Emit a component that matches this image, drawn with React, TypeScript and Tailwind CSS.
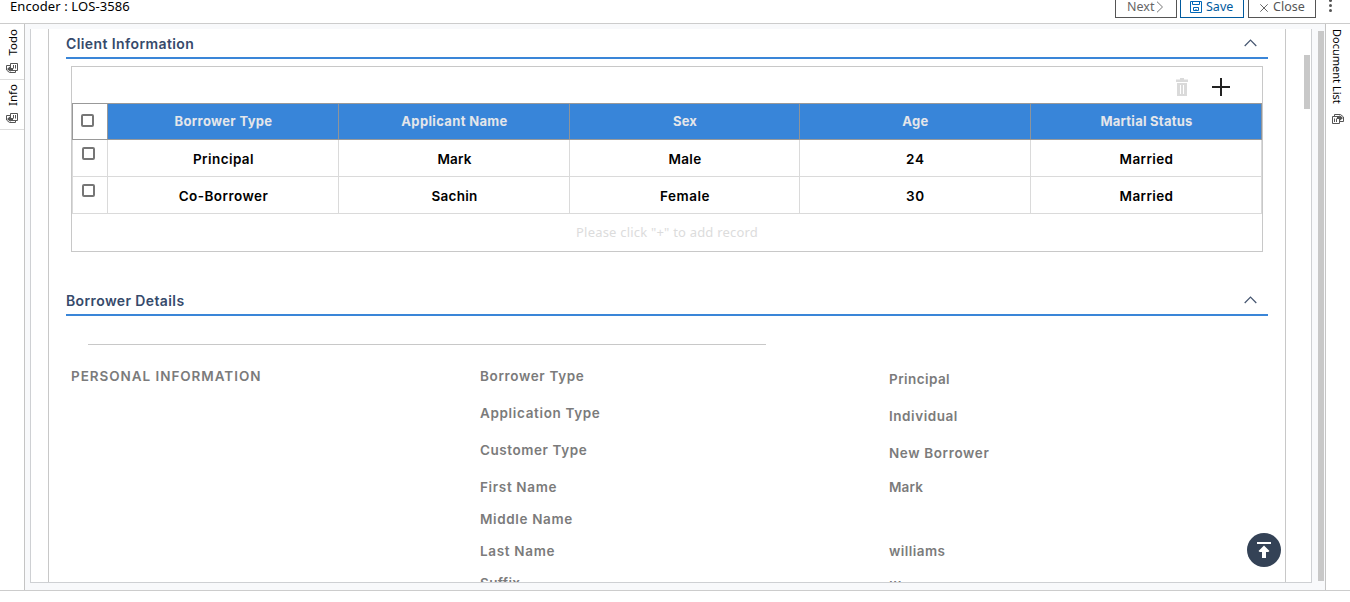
import { ReactNode } from "react";

type Cell = { text: string; ls: number };

const headers: Cell[] = [
  { text: "Borrower Type", ls: 0.35 },
  { text: "Applicant Name", ls: 0.35 },
  { text: "Sex", ls: 0.2 },
  { text: "Age", ls: 0.4 },
  { text: "Martial Status", ls: 0.25 },
];

const records: Cell[][] = [
  [
    { text: "Principal", ls: 0.42 },
    { text: "Mark", ls: 0.1 },
    { text: "Male", ls: 0.35 },
    { text: "24", ls: 0.8 },
    { text: "Married", ls: 0.38 },
  ],
  [
    { text: "Co-Borrower", ls: 0.45 },
    { text: "Sachin", ls: 0.25 },
    { text: "Female", ls: 0.55 },
    { text: "30", ls: 0.8 },
    { text: "Married", ls: 0.38 },
  ],
];

type Detail = { label: Cell; value?: Cell; height: string; shift?: string };

const details: Detail[] = [
  { label: { text: "Borrower Type", ls: 0.65 }, value: { text: "Principal", ls: 0.42 }, height: "h-[37px]", shift: "pt-[3px]" },
  { label: { text: "Application Type", ls: 0.65 }, value: { text: "Individual", ls: 0.55 }, height: "h-[37px]", shift: "pt-[3px]" },
  { label: { text: "Customer Type", ls: 0.57 }, value: { text: "New Borrower", ls: 0.62 }, height: "h-[37px]", shift: "pt-[3px]" },
  { label: { text: "First Name", ls: 0.66 }, value: { text: "Mark", ls: 0.15 }, height: "h-8" },
  { label: { text: "Middle Name", ls: 0.63 }, height: "h-8" },
  { label: { text: "Last Name", ls: 0.67 }, value: { text: "williams", ls: 0.45 }, height: "h-8" },
  { label: { text: "Suffix", ls: 0.35 }, value: { text: "III", ls: 0.6 }, height: "h-8", shift: "pt-[3px]" },
];

function Txt({ cell }: { cell: Cell }) {
  return <span style={{ letterSpacing: cell.ls }}>{cell.text}</span>;
}

function CardsIcon({ turned = false }: { turned?: boolean }) {
  return (
    <svg width="12" height="10" viewBox="0 0 12 10" fill="none" stroke="#555" className={turned ? "rotate-180" : ""}>
      <path d="M.5 2.500h7v7H.5zM2.500 4.500v3.500M4.500 4.500v3.500" />
      <path d="M2.500 2.500v-2H8.500l3 2.500v4.500H7.500" />
      <path d="M5 2.500h2.500V1l3.500 3-3.500 3V5H5z" fill="#555" stroke="none" />
    </svg>
  );
}

function Checkbox() {
  return <div className="size-[13px] rounded-[2px] border-2 border-[#767676] bg-white" />;
}

function SectionTitle({ cell }: { cell: Cell }) {
  return (
    <div className="flex h-[30px] items-center justify-between border-b-2 border-[#3a86d8] pr-[11px] text-[14px] font-semibold text-[#364a6b]">
      <div>
        <Txt cell={cell} />
      </div>
      <svg width="13" height="8" viewBox="0 0 13 8" fill="none" stroke="#44546f" strokeWidth="1.2">
        <path d="M.7 7 6.5 1l5.8 6" />
      </svg>
    </div>
  );
}

function HeaderButton({ className, children }: { className: string; children: ReactNode }) {
  return (
    <button className={`flex h-5 items-end border border-t-0 pb-[1px] text-[12.5px] leading-[18px] ${className}`}>{children}</button>
  );
}

export default function App() {
  return (
    <div className="flex h-[602px] w-[1350px] flex-col overflow-hidden bg-white font-['Inter',sans-serif]">
      <header className="flex h-6 shrink-0 items-end justify-between border-b border-[#ccc] pl-[10px] font-['Noto_Sans',sans-serif]">
        <div className="h-[26px] text-[13px] leading-[18px] tracking-[0.1px] text-black">Encoder : LOS-3586</div>
        <div className="flex pb-[5px]">
          <HeaderButton className="w-[62px] border-[#555] pl-[11px] text-[#666]">
            Next
            <svg className="mb-[3px] ml-[2px]" width="8" height="12" viewBox="0 0 8 12" fill="none" stroke="#777">
              <path d="m1 .7 5.5 5.3L1 11.3" />
            </svg>
          </HeaderButton>
          <HeaderButton className="ml-[3px] w-16 border-[#005a9e] pl-[9px] text-[#005a9e]">
            <svg className="mb-[3px] mr-[4px]" width="12" height="12" viewBox="0 0 12 12" fill="none" stroke="#0067b8">
              <path d="M.5.5h11v11H.5zM2.5.5v3h7v-3M3.500 9.500V6.500h5v3z" />
              <path d="M5.500 8.500h1" />
            </svg>
            Save
          </HeaderButton>
          <HeaderButton className="ml-1 w-[68px] border-[#555] pl-[11px] text-[#555]">
            <svg className="mb-[4px] mr-[5px]" width="8" height="8" viewBox="0 0 8 8" fill="none" stroke="#555" strokeWidth=".9">
              <path d="m.3.3 7.400 7.400M7.700.3.300 7.700" />
            </svg>
            Close
          </HeaderButton>
          <div className="ml-[13px] mr-[18px] flex flex-col justify-end gap-[2px] pb-[6px]">
            <i className="size-[3px] rounded-full bg-[#555]" />
            <i className="size-[3px] rounded-full bg-[#555]" />
            <i className="size-[3px] rounded-full bg-[#555]" />
          </div>
        </div>
      </header>

      <div className="flex h-[567px] shrink-0 border-b border-[#ccc]">
        <aside className="w-[25px] shrink-0 border-r border-[#c4c4c4] font-['Noto_Sans',sans-serif] text-[11.5px] text-black">
          <div className="flex h-14 flex-col items-center justify-between border-b border-[#ddd] pb-[6px] pt-[5px]">
            <span className="ml-[2px] rotate-180 leading-4 [writing-mode:vertical-rl]">Todo</span>
            <CardsIcon turned />
          </div>
          <div className="flex h-[50px] flex-col items-center justify-between border-b border-[#ddd] pb-[6px] pt-[4px]">
            <span className="ml-[2px] rotate-180 leading-4 [writing-mode:vertical-rl]">Info</span>
            <CardsIcon turned />
          </div>
        </aside>

        <main className="flex min-w-0 grow bg-[#f8f9fb] pl-[5px] pt-[5px]">
          <div className="flex h-[554px] w-[1282px] overflow-hidden border-x border-b border-[#ced0d3] bg-white">
            <div className="relative ml-[17px] h-[553px] w-[1238px] overflow-hidden border-x border-[#c8c8c8] px-[17px]">
              <SectionTitle cell={{ text: "Client Information", ls: 0.4 }} />
              <div className="ml-[5px] mt-[7px] w-[1192px] border border-[#c8c8c8]">
                <div className="flex h-9 items-center justify-end gap-6 pr-8 pt-[3px]">
                  <svg width="12" height="18" viewBox="0 0 12 18" fill="#dadada">
                    <path d="M4 0h4v1.500h4v2.500H0V1.500h4zM1 5h10v13H1zM4 7v9h1V7zM7 7v9h1V7z" fillRule="evenodd" />
                  </svg>
                  <svg width="18" height="18" viewBox="0 0 18 18" fill="#222">
                    <path d="M8 0h2v8h8v2h-8v8H8v-8H0V8h8z" />
                  </svg>
                </div>
                <div className="grid h-[37px] grid-cols-[36px_231px_231px_230px_231px_231px] border-y border-[#999] text-[13px] font-bold text-[#e4e6ea]">
                  <div className="border-x border-[#999] pl-2 pt-[10px]">
                    <Checkbox />
                  </div>
                  {headers.map((h) => (
                    <div key={h.text} className="flex items-center justify-center border-r border-[#8f9499] bg-[#3885d9] pl-px">
                      <Txt cell={h} />
                    </div>
                  ))}
                </div>
                {records.map((row) => (
                  <div key={row[0].text} className="grid h-[37px] grid-cols-[36px_231px_231px_230px_231px_231px] border-b border-[#dadada] text-[13.5px] font-semibold text-black">
                    <div className="border-x border-[#dadada] pl-[9px] pt-[7px]">
                      <Checkbox />
                    </div>
                    {row.map((c, i) => (
                      <div key={i} className="flex items-center justify-center border-r border-[#dadada] pl-px pt-[3px]">
                        <Txt cell={c} />
                      </div>
                    ))}
                  </div>
                ))}
                <div className="flex h-[37px] items-center justify-center font-['Noto_Sans',sans-serif] text-[13px] text-[#dcdcdc]">
                  <Txt cell={{ text: 'Please click "+" to add record', ls: 0.2 }} />
                </div>
              </div>

              <div className="mt-[34px]">
                <SectionTitle cell={{ text: "Borrower Details", ls: 0.38 }} />
              </div>
              <div className="ml-[22px] mt-7 w-[678px] border-t border-[#c8c8c8]" />
              <div className="ml-[5px] mt-[23px] flex text-[13.5px] font-semibold leading-4 text-[#7b7b7b]">
                <div className="w-[409px]">
                  <Txt cell={{ text: "PERSONAL INFORMATION", ls: 0.95 }} />
                </div>
                <div>
                  {details.map((d) => (
                    <div key={d.label.text} className={`flex ${d.height}`}>
                      <div className="w-[409px]">
                        <Txt cell={d.label} />
                      </div>
                      {d.value && (
                        <div className={d.shift}>
                          <Txt cell={d.value} />
                        </div>
                      )}
                    </div>
                  ))}
                </div>
              </div>
              <button className="absolute bottom-[15px] right-1 flex size-[34px] items-center justify-center rounded-full bg-[#344256]">
                <svg width="14" height="16" viewBox="0 0 14 16" fill="#fff">
                  <path d="M0 0h14v2H0zM7 3.500l5.500 5.500-1.200 1H9v6H5v-6H2.700L1.500 9z" />
                </svg>
              </button>
            </div>
            <div className="ml-[18px] mt-[26px] h-[54px] w-[6px] bg-[#c8c8c8]" />
          </div>
          <div className="ml-[6px] mt-[2px] h-[550px] w-[6px] bg-[#c8c8c8]" />
        </main>

        <aside className="flex w-[25px] shrink-0 flex-col items-center border-l border-[#c4c4c4] pt-[5px] font-['Noto_Sans',sans-serif] text-[11px] text-black">
          <span className="mr-[2px] leading-4 [writing-mode:vertical-rl]">Document List</span>
          <div className="mt-[10px]">
            <CardsIcon />
          </div>
        </aside>
      </div>
    </div>
  );
}
